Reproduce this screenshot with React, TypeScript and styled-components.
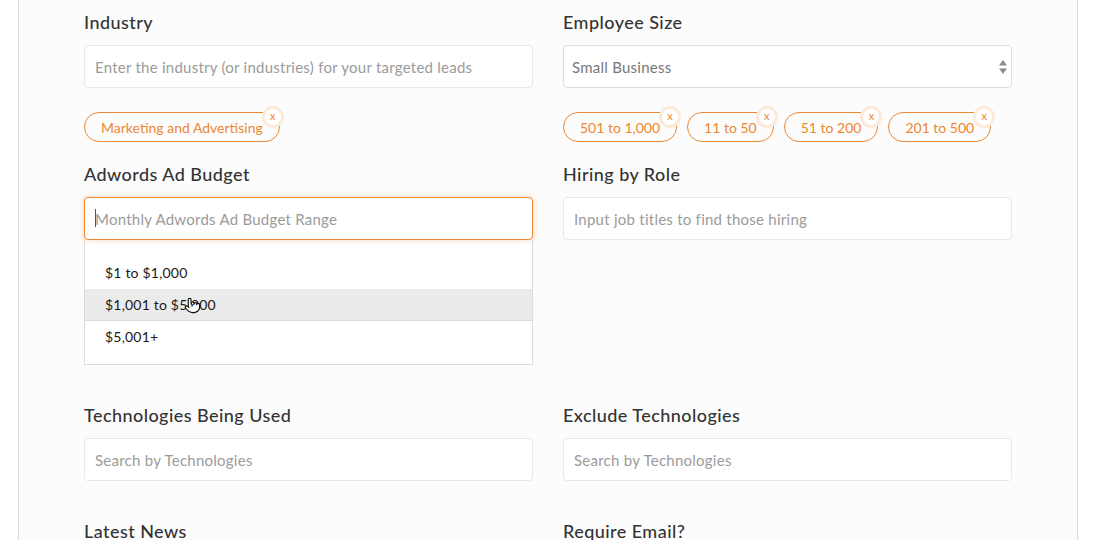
import React from "react";
import styled, { createGlobalStyle } from "styled-components";
import { Pointer } from "lucide-react";

const GlobalStyle = createGlobalStyle`
  html, body {
    margin: 0;
    padding: 0;
    background: #ffffff;
  }
  body {
    font-family: Lato, "Open Sans", sans-serif;
    color: #333;
  }
  * {
    box-sizing: border-box;
  }
`;

const orange = "#ec8732";

const Panel = styled.div`
  margin-left: 18px;
  width: 1060px;
  min-height: 100vh;
  border-left: 1px solid #dcdcdc;
  border-right: 1px solid #dcdcdc;
  background: #fcfcfc;
  padding: 11px 65px 40px;
`;

const Row = styled.div`
  display: grid;
  grid-template-columns: 1fr 1fr;
  column-gap: 30px;
  align-items: start;
`;

const Field = styled.div<{ $tight?: boolean }>`
  display: flex;
  flex-direction: column;
  padding-bottom: ${(p) => (p.$tight ? "21px" : "39px")};
`;

const Label = styled.label`
  font-size: 18px;
  line-height: 22px;
  font-weight: 500;
  letter-spacing: 0.45px;
  color: #333;
  margin-bottom: 12px;
`;

const Input = styled.input<{ $focused?: boolean }>`
  height: 43px;
  width: 100%;
  padding: 0 10px;
  border: 1px solid ${(p) => (p.$focused ? orange : "#e8e8e8")};
  border-radius: 4px;
  background: #fff;
  font-family: Lato, "Open Sans", sans-serif;
  font-size: 15px;
  letter-spacing: 0.25px;
  color: #333;
  outline: none;
  box-shadow: ${(p) =>
    p.$focused ? "0 0 4px 2px rgba(240, 140, 60, 0.18)" : "none"};

  &::placeholder {
    color: #9b9b9b;
  }
`;

const InputWrap = styled.div`
  position: relative;
`;

const Caret = styled.span`
  position: absolute;
  left: 11px;
  top: 12px;
  width: 1px;
  height: 18px;
  background: #555;
`;

const Select = styled.select`
  appearance: none;
  height: 43px;
  width: 100%;
  padding: 0 24px 0 8px;
  border: 1px solid #dedede;
  border-radius: 4px;
  background: #fff;
  font-family: Lato, "Open Sans", sans-serif;
  font-size: 15px;
  letter-spacing: 0.25px;
  color: #777;
  outline: none;
`;

const SelectArrows = styled.svg`
  position: absolute;
  right: 5px;
  top: 15px;
  pointer-events: none;
`;

const TagList = styled.div`
  display: flex;
  flex-wrap: wrap;
  gap: 10px;
  margin-top: 24px;
`;

const Tag = styled.span`
  position: relative;
  display: inline-flex;
  align-items: center;
  height: 30px;
  padding: 0 16px;
  border: 1px solid ${orange};
  border-radius: 15px;
  color: ${orange};
  font-size: 14px;
  white-space: nowrap;
`;

const TagClose = styled.span`
  position: absolute;
  top: -4px;
  right: -2px;
  width: 16px;
  height: 16px;
  border-radius: 50%;
  background: #fff;
  box-shadow: 0 0 0 3px #fcebd9;
  color: ${orange};
  font-size: 11px;
  line-height: 14px;
  text-align: center;
`;

const Menu = styled.ul`
  list-style: none;
  margin: 0;
  padding: 17px 0 11px;
  background: #fff;
  border: 1px solid #dcdcdc;
  border-top: none;
`;

const MenuItem = styled.li<{ $active?: boolean }>`
  position: relative;
  height: 32px;
  display: flex;
  align-items: center;
  padding-left: 20px;
  font-size: 14px;
  letter-spacing: 0.2px;
  color: #1a1a1a;
  background: ${(p) => (p.$active ? "#ebebeb" : "transparent")};
  border-bottom: 1px solid ${(p) => (p.$active ? "#dcdcdc" : "transparent")};
`;

const HandCursor = styled.span`
  position: absolute;
  left: 99px;
  top: 8px;
  display: flex;
`;

const industryTags = ["Marketing and Advertising"];
const sizeTags = ["501 to 1,000", "11 to 50", "51 to 200", "201 to 500"];
const budgets = ["$1 to $1,000", "$1,001 to $5,000", "$5,001+"];

const TagGroup: React.FC<{ tags: string[] }> = ({ tags }) => (
  <TagList>
    {tags.map((t) => (
      <Tag key={t}>
        {t}
        <TagClose>x</TagClose>
      </Tag>
    ))}
  </TagList>
);

export default function App() {
  return (
    <>
      <GlobalStyle />
      <Panel>
        <Row>
          <Field $tight>
            <Label>Industry</Label>
            <Input placeholder="Enter the industry (or industries) for your targeted leads" />
            <TagGroup tags={industryTags} />
          </Field>
          <Field $tight>
            <Label>Employee Size</Label>
            <InputWrap>
              <Select defaultValue="small">
                <option value="small">Small Business</option>
              </Select>
              <SelectArrows width="8" height="14" viewBox="0 0 8 14">
                <path d="M4 0 L8 5.5 L0 5.5 Z" fill="#8a8a8a" />
                <path d="M0 8.5 L8 8.5 L4 14 Z" fill="#8a8a8a" />
              </SelectArrows>
            </InputWrap>
            <TagGroup tags={sizeTags} />
          </Field>
        </Row>

        <Row>
          <Field>
            <Label>Adwords Ad Budget</Label>
            <InputWrap>
              <Input $focused placeholder="Monthly Adwords Ad Budget Range" />
              <Caret />
            </InputWrap>
            <Menu>
              {budgets.map((b, i) => (
                <MenuItem key={b} $active={i === 1}>
                  {b}
                  {i === 1 && (
                    <HandCursor>
                      <Pointer size={17} fill="#fff" color="#111" strokeWidth={1.6} />
                    </HandCursor>
                  )}
                </MenuItem>
              ))}
            </Menu>
          </Field>
          <Field>
            <Label>Hiring by Role</Label>
            <Input placeholder="Input job titles to find those hiring" />
          </Field>
        </Row>

        <Row>
          <Field>
            <Label>Technologies Being Used</Label>
            <Input placeholder="Search by Technologies" />
          </Field>
          <Field>
            <Label>Exclude Technologies</Label>
            <Input placeholder="Search by Technologies" />
          </Field>
        </Row>

        <Row>
          <Field>
            <Label>Latest News</Label>
            <Input placeholder="Select news type" />
          </Field>
          <Field>
            <Label>Require Email?</Label>
            <Input placeholder="Yes or No" />
          </Field>
        </Row>
      </Panel>
    </>
  );
}
